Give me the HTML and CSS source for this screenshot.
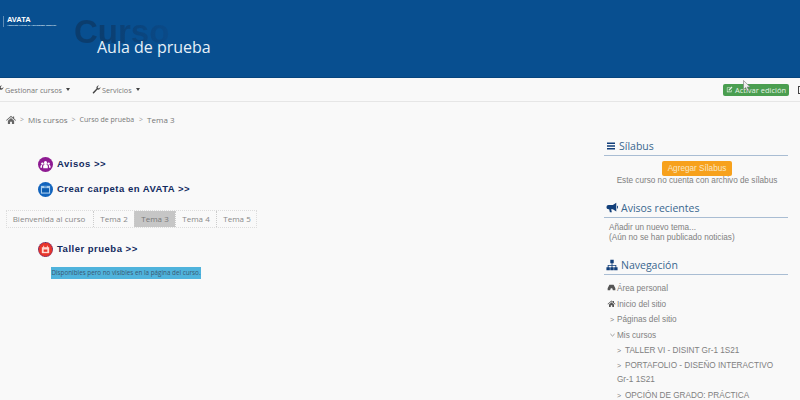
FILE: index.html
```html
<!DOCTYPE html>
<html lang="es">
<head>
    <meta charset="UTF-8">
    <title>Aula de prueba</title>
    <link rel="stylesheet" href="styles.css">
</head>

<body>

    <!-- Cabecera -->
    <header class="banner">
        <div class="logo">
            <div class="logo-name">AVATA</div>
            <div class="logo-sub">Ambiente Virtual de Aprendizaje Superior</div>
        </div>
        <div class="banner-title">
            <span class="ghost-title">Curso</span>
            <h1>Aula de prueba</h1>
        </div>
    </header>

    <!-- Menu -->
    <nav class="menu">
        <a class="menu-item menu-first">
            <svg class="wrench" viewBox="0 0 16 16"><path d="M15 4.2a4 4 0 0 1-5.3 3.8L3.6 14.6a1.3 1.3 0 0 1-2-1.8l6.5-6.4A4 4 0 0 1 12.3 1L9.9 3.4l.6 2 2 .6L15 3.6z"/></svg>
            Gestionar cursos <span class="caret"></span>
        </a>
        <a class="menu-item menu-second">
            <svg class="wrench" viewBox="0 0 16 16"><path d="M15 4.2a4 4 0 0 1-5.3 3.8L3.6 14.6a1.3 1.3 0 0 1-2-1.8l6.5-6.4A4 4 0 0 1 12.3 1L9.9 3.4l.6 2 2 .6L15 3.6z"/></svg>
            Servicios <span class="caret"></span>
        </a>
        <a class="edit-btn">
            <svg class="edit-icon" viewBox="0 0 12 12"><path d="M1.5 2.5h6v1H2.500v6h6V7h1v3.500h-8z"/><path d="M4.500 6l5-5 1.500 1.500-5 5H4.500z"/></svg>
            Activar edición
        </a>
        <span class="menu-end"></span>
        <!-- Puntero del raton sobre el boton -->
        <svg class="cursor" viewBox="0 0 8 12"><path d="M.5.5v9l2.200-2 1.500 3.500 1.500-.7-1.500-3.300h3z"/></svg>
    </nav>

    <div class="crumbs">
        <svg class="home-icon" viewBox="0 0 16 14"><path d="M8 1 0 8l1 1 7-6 7 6 1-1-3-2.600V2h-2v1.700z"/><path d="M3 9l5-4.300L13 9v5H9.500v-3.500h-3V14H3z"/></svg>
        <span class="sep">&gt;</span>
        <span>Mis cursos</span>
        <span class="sep">&gt;</span>
        <span class="crumb-small">Curso de prueba</span>
        <span class="sep">&gt;</span>
        <span>Tema 3</span>
    </div>

    <div class="page">
        <main class="content">
            <div class="link-row">
                <span class="round-icon purple">
                    <svg viewBox="0 0 12 12" fill="#fff"><circle cx="6" cy="4" r="1.700"/><circle cx="2.600" cy="5" r="1.300"/><circle cx="9.400" cy="5" r="1.300"/><path d="M3.500 10V8a2.500 2.500 0 0 1 5 0v2z"/><path d="M.5 9.500V8c0-1 1-1.700 2.100-1.700-.3.500-.4 1-.4 1.700v1.500zM11.500 9.500V8c0-1-1-1.700-2.100-1.700.3.500.4 1 .4 1.700v1.500z"/></svg>
                </span>
                <a class="big-link">Avisos &gt;&gt;</a>
            </div>
            <div class="link-row">
                <span class="round-icon blue">
                    <svg viewBox="0 0 12 12"><path d="M1 2h10v8.500H1z" fill="#a9cdee"/><path d="M2.200 4.500h7.600v4.800H2.200z" fill="#0d5db0"/><path d="M4.500 2.800h3v.8h-3z" fill="#0d5db0"/></svg>
                </span>
                <a class="big-link">Crear carpeta en AVATA &gt;&gt;</a>
            </div>

            <ul class="tabs">
                <li>Bienvenida al curso</li>
                <li>Tema 2</li>
                <li class="active">Tema 3</li>
                <li>Tema 4</li>
                <li>Tema 5</li>
            </ul>

            <div class="link-row taller">
                <span class="round-icon red">
                    <svg viewBox="0 0 12 12"><path d="M2 3.500h8v6.500H2z" fill="#ffd9d2"/><path d="M3.500 2h1v2.500h-1zM7.500 2h1v2.500h-1z" fill="#ffd9d2"/><path d="M4 6h4v2.500H4z" fill="#e8352b"/></svg>
                </span>
                <a class="big-link">Taller prueba &gt;&gt;</a>
            </div>
            <div class="hidden-note">Disponibles pero no visibles en la página del curso.</div>
        </main>

        <aside class="sidebar">
            <section class="block">
                <h2 class="block-title">
                    <svg class="block-icon icon-list" viewBox="0 0 10 10"><path d="M1 1.500h8v1.500H1zM1 4.300h8v1.500H1zM1 7.100h8v1.500H1z"/></svg>
                    Sílabus
                </h2>
                <div class="silabus">
                    <a class="orange-btn">Agregar Sílabus</a>
                    <p>Este curso no cuenta con archivo de sílabus</p>
                </div>
            </section>

            <section class="block">
                <h2 class="block-title">
                    <svg class="block-icon" viewBox="0 0 14 14"><path d="M12 1v10L8 8.500H6l.8 3.500H4.500L3.700 8.500H3a2.500 2.500 0 0 1 0-5h5z"/><path d="M13 4.500a1.500 1.500 0 0 1 0 3z"/></svg>
                    Avisos recientes
                </h2>
                <div class="news">
                    <div>Añadir un nuevo tema...</div>
                    <div>(Aún no se han publicado noticias)</div>
                </div>
            </section>

            <section class="block">
                <h2 class="block-title">
                    <svg class="block-icon" viewBox="0 0 14 14"><path d="M5 1h4v4H7.500v2H12v2.500h1.500V13h-4V9.500H11V8H7.500v1.500H9V13H5V9.500h1.500V8H3v1.500h1.500V13h-4V9.500H2V7h4.500V5H5z"/></svg>
                    Navegación
                </h2>
                <ul class="tree">
                    <li><svg class="tree-icon" viewBox="0 0 12 10"><path d="M3 1h6l2.500 5v3H8L7 6H5L4 9H.5V6z"/></svg>Área personal</li>
                    <li><svg class="tree-icon" viewBox="0 0 16 14"><path d="M8 1 0 8l1 1 7-6 7 6 1-1-3-2.600V2h-2v1.700z"/><path d="M3 9l5-4.300L13 9v5H9.500v-3.500h-3V14H3z"/></svg>Inicio del sitio</li>
                    <li class="lvl1"><span class="arrow">&gt;</span>Páginas del sitio</li>
                    <li class="lvl1"><svg class="arrow-down" viewBox="0 0 6 4"><path d="M.5.8 3 3.200 5.500.8" fill="none" stroke="#888"/></svg>Mis cursos</li>
                    <li class="lvl2"><span class="arrow">&gt;</span>TALLER VI - DISINT Gr-1 1S21</li>
                    <li class="lvl2"><span class="arrow">&gt;</span>PORTAFOLIO - DISEÑO INTERACTIVO<br>Gr-1 1S21</li>
                    <li class="lvl2"><span class="arrow">&gt;</span>OPCIÓN DE GRADO: PRÁCTICA</li>
                </ul>
            </section>
        </aside>
    </div>

</body>
</html>
```

FILE: styles.css
```css
/* Layout general */
html, body {
    margin: 0;
    height: 400px;
    overflow: hidden;
}

body {
    font-family: "Open Sans", "Liberation Sans", sans-serif;
    background: #f9f9f9;
    color: #777;
}

/* Cabecera */
.banner {
    height: 78px;
    background: #084f90;
    display: flex;
    box-sizing: border-box;
    border-bottom: 1px solid #07457e;
}

.logo {
    width: 71px;
    height: 11px;
    margin: 16px 0 0 3px;
    padding-left: 3px;
    border-left: 1px solid rgba(255, 255, 255, 0.35);
    color: #fff;
    box-sizing: border-box;
}

.logo-name {
    font-family: "Liberation Sans", sans-serif;
    font-size: 7.500px;
    font-weight: 700;
    line-height: 8px;
}

.logo-sub {
    font-family: "Liberation Sans", sans-serif;
    font-size: 2.500px;
    font-weight: 700;
    line-height: 3px;
    white-space: nowrap;
    color: #dfeaf4;
}

.banner-title {
    position: relative;
    padding: 35px 0 0 23px;
}

.ghost-title {
    position: absolute;
    left: 0;
    top: 9px;
    font-family: "Liberation Sans", sans-serif;
    font-size: 33px;
    font-weight: 700;
    line-height: 46px;
    background: linear-gradient(90deg, #0b3d6e 25%, #0a4a88 100%);
    -webkit-background-clip: text;
    background-clip: text;
    color: transparent;
}

.banner-title h1 {
    position: relative;
    margin: 0;
    font-size: 16px;
    font-weight: 400;
    line-height: 24px;
    color: #e6f0f8;
}

/* Menu */
.menu {
    position: relative;
    height: 24px;
    box-sizing: border-box;
    display: flex;
    align-items: center;
    border-bottom: 1px solid #e6e6e6;
    font-size: 7.250px;
}

.menu-item {
    display: flex;
    align-items: center;
    gap: 1px;
    color: #777;
}

.menu-first {
    margin-left: -5px;
}

.menu-second {
    margin-left: 22px;
}

.wrench {
    width: 9px;
    height: 9px;
    fill: #444;
}

.caret {
    margin-left: 3px;
    border-top: 3px solid #444;
    border-left: 2px solid transparent;
    border-right: 2px solid transparent;
}

.edit-btn {
    margin-left: auto;
    height: 12px;
    width: 66px;
    background: #4a9e50;
    border-radius: 2px;
    color: #e6f2e6;
    display: flex;
    align-items: center;
    justify-content: center;
    gap: 2px;
    font-size: 7.500px;
}

.edit-icon {
    width: 7px;
    height: 7px;
    fill: #e6f2e6;
}

.menu-end {
    width: 3px;
    height: 6px;
    margin: 0 -3px 0 9px;
    border: 1px solid #444;
}

.cursor {
    position: absolute;
    left: 743px;
    top: 2px;
    width: 8px;
    height: 12px;
    fill: #eee;
    stroke: #777;
    stroke-width: 0.6;
}

/* Breadcrumb */
.crumbs {
    height: 34px;
    display: flex;
    align-items: center;
    padding-left: 6px;
    font-size: 8px;
    color: #777;
    gap: 4px;
}

.crumb-small {
    font-size: 7px;
    margin-right: 1px;
}

.sep {
    font-size: 7px;
    color: #999;
}

.home-icon {
    width: 10px;
    height: 9px;
    fill: #666;
}

/* Contenido */
.page {
    display: flex;
    align-items: flex-start;
}

.content {
    width: 604px;
    padding: 21px 0 0 6px;
    box-sizing: border-box;
}

.link-row {
    display: flex;
    align-items: center;
    gap: 4px;
    margin-left: 32px;
    height: 15px;
    margin-bottom: 10px;
}

.round-icon {
    width: 15px;
    height: 15px;
    border-radius: 50%;
    display: flex;
    align-items: center;
    justify-content: center;
    flex-shrink: 0;
}

.round-icon svg {
    width: 11px;
    height: 11px;
}

.purple { background: #8e1b92; }
.blue { background: #1264bd; }

.red {
    background: #e8352b;
    box-sizing: border-box;
    border: 1px dotted #3a2f8a;
}

.big-link {
    font-family: "Liberation Sans", sans-serif;
    font-size: 9.500px;
    font-weight: 700;
    letter-spacing: 0.5px;
    color: #122a5e;
    padding-bottom: 2px;
}

.tabs {
    list-style: none;
    margin: 13px 0 0;
    padding: 0;
    display: flex;
    box-sizing: border-box;
    height: 18px;
    width: 251px;
    border: 1px dotted #ddd;
    font-size: 8px;
    line-height: 16px;
    color: #888;
    white-space: nowrap;
}

.tabs li {
    flex: 0 0 41px;
    box-sizing: border-box;
    text-align: center;
    border-left: 1px dotted #ccc;
}

.tabs li:first-child {
    flex: 0 0 86px;
    padding-right: 2px;
    border-left: 0;
}

.tabs .active {
    background: #c6c6c6;
    color: #777;
}

.taller {
    margin-top: 14px;
}

.hidden-note {
    margin-left: 45px;
    width: 150px;
    height: 12px;
    background: #4fb3dc;
    color: #3b5872;
    font-size: 6.300px;
    line-height: 12px;
    text-align: center;
    white-space: nowrap;
}

/* Barra lateral */
.sidebar {
    width: 184px;
    margin-top: 1px;
    font-family: "Liberation Sans", sans-serif;
    font-size: 8.200px;
    color: #808080;
}

.block {
    margin-bottom: 13px;
}

.block-title {
    margin: 0;
    height: 18px;
    display: flex;
    align-items: center;
    gap: 3px;
    padding-left: 2px;
    border-bottom: 1px solid #a9bdd3;
    font-family: "Open Sans", sans-serif;
    font-size: 10.500px;
    font-weight: 400;
    color: #39678f;
}

.block-icon {
    width: 12px;
    height: 12px;
    fill: #123f7a;
}

.icon-list {
    width: 10px;
    height: 10px;
}

.silabus {
    text-align: center;
    padding: 5px 0 0 2px;
}

.orange-btn {
    display: block;
    width: 70px;
    height: 15px;
    line-height: 15px;
    margin: 0 auto;
    background: #f7a11c;
    border-radius: 2px;
    color: #fbe7c2;
}

.silabus p {
    margin: 0;
    line-height: 10px;
}

.news {
    padding: 5px 0 0 5px;
    line-height: 10px;
}

.tree {
    list-style: none;
    margin: 0;
    padding: 6px 0 0 3px;
    line-height: 15.500px;
}

.tree-icon {
    width: 9px;
    height: 7px;
    fill: #555;
    margin-right: 1px;
}

.arrow {
    display: inline-block;
    width: 8px;
    font-size: 7px;
}

.arrow-down {
    width: 5px;
    height: 4px;
    margin-right: 2px;
    vertical-align: 1px;
}

.lvl1 {
    padding-left: 3px;
}

.lvl1 .arrow {
    width: 7px;
}

.lvl2 {
    padding: 0.750px 0 0.750px 10px;
    line-height: 14px;
}
```
